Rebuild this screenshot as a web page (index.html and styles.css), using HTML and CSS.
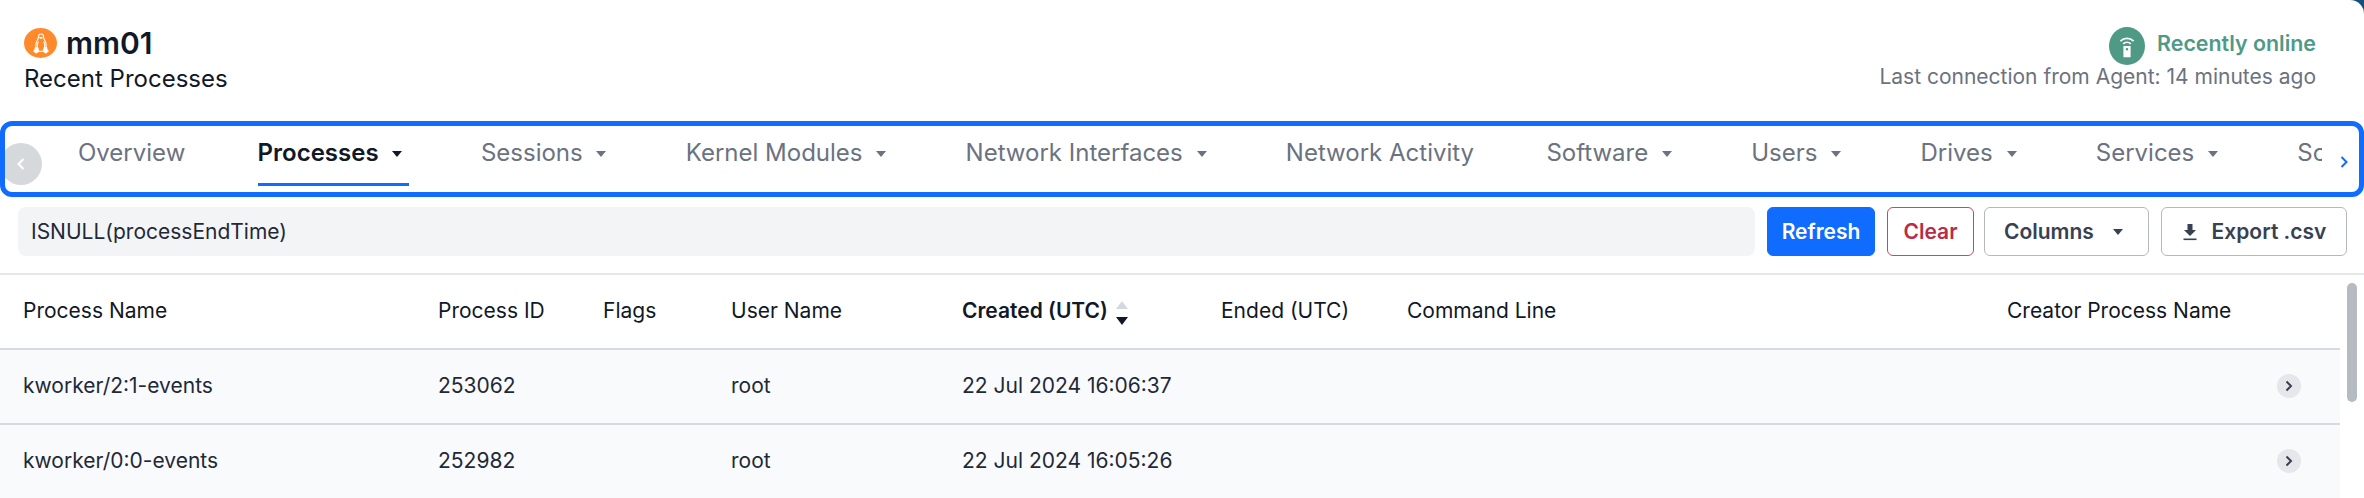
FILE: index.html
```html
<!DOCTYPE html>
<html>
  <head>
    <meta charset="UTF-8">
    <title>mm01 Recent Processes</title>
    <link rel="stylesheet" href="styles.css">
  </head>
  <body>
    <div class="page">
    <header class="head">
      <div>
        <h1 class="host">
          <span class="os-badge">
            <svg width="16" height="21" viewBox="0 0 16 21" fill="none" stroke="#fff" stroke-width="1.100" stroke-linejoin="round">
              <path d="M8 1C6.300 1 5.500 2.300 5.500 3.800c0 1.400-.3 2.200-1.200 3.400C3.200 8.800 2.600 10.800 2.800 13.500"/>
              <path d="M8 1c1.700 0 2.500 1.300 2.500 2.800 0 1.400.3 2.200 1.200 3.400 1.100 1.600 1.700 3.600 1.500 6.300"/>
              <path d="M6.700 4.500L8 5.400l1.300-.9z" fill="#fff"/>
              <path d="M5.300 8.500C4.300 10.500 4 13 4.600 15M10.700 8.500c1 2 1.300 4.500.7 6.500"/>
              <path d="M2.500 14l2.300 1 1 3.300-2.800 1.600L.8 18l1-.8zM13.500 14l-2.300 1-1 3.300 2.800 1.600 2.200-1.900-1-.8z" fill="#fff"/>
              <path d="M5.800 18.300h4.400"/>
            </svg>
          </span>
          mm01
        </h1>
        <div class="sub">Recent Processes</div>
      </div>
      <div class="status">
        <div class="online">
          <span class="online-badge">
            <svg width="16" height="24" viewBox="0 0 20 30" fill="#fff">
              <path d="M1 8a13 13 0 0 1 18 0l-1.500 1.600a11 11 0 0 0-15 0z"/>
              <path d="M4.500 11.500a8 8 0 0 1 11 0L14 13a6 6 0 0 0-8 0z"/>
              <path fill-rule="evenodd" d="M5.500 15h9v14h-9zM10 17.500a1.600 1.600 0 1 0 0 3.200 1.600 1.600 0 0 0 0-3.200z"/>
            </svg>
          </span>
          Recently online
        </div>
        <div class="last-seen">Last connection from Agent: 14 minutes ago</div>
      </div>
    </header>

    <nav class="tabs">
      <span class="tab-arrow prev">
        <svg width="10" height="14" viewBox="0 0 10 14" fill="none" stroke="#fff" stroke-width="2"><path d="M7.500 2L2.500 7l5 5"/></svg>
      </span>
      <div class="tab-list">
        <a class="tab">Overview</a>
        <a class="tab active has-menu">Processes <i class="caret"></i></a>
        <a class="tab has-menu">Sessions <i class="caret"></i></a>
        <a class="tab has-menu">Kernel Modules <i class="caret"></i></a>
        <a class="tab has-menu">Network Interfaces <i class="caret"></i></a>
        <a class="tab">Network Activity</a>
        <a class="tab has-menu">Software <i class="caret"></i></a>
        <a class="tab has-menu">Users <i class="caret"></i></a>
        <a class="tab has-menu">Drives <i class="caret"></i></a>
        <a class="tab has-menu">Services <i class="caret"></i></a>
        <a class="tab has-menu">Scheduled Tasks <i class="caret"></i></a>
      </div>
      <span class="tab-arrow next">
        <svg width="10" height="14" viewBox="0 0 10 14" fill="none" stroke="#0f6cff" stroke-width="2"><path d="M2.500 2l5 5-5 5"/></svg>
      </span>
    </nav>

    <div class="toolbar">
      <div class="query">ISNULL(processEndTime)</div>
      <button class="btn primary">Refresh</button>
      <button class="btn danger">Clear</button>
      <button class="btn columns">Columns <i class="caret dark"></i></button>
      <button class="btn export">
        <svg width="16" height="18" viewBox="0 0 16 18" fill="#374151"><path d="M5.500 1h5v6h3.500L8 13 2 7h3.500z"/><path d="M1.500 15.500h13v1.600h-13z"/></svg>
        Export .csv
      </button>
    </div>

    <section class="table">
      <div class="row head-row">
        <span>Process Name</span>
        <span>Process ID</span>
        <span>Flags</span>
        <span>User Name</span>
        <span class="sorted">Created (UTC) <i class="sort"><b></b><b></b></i></span>
        <span>Ended (UTC)</span>
        <span>Command Line</span>
        <span>Creator Process Name</span>
      </div>
      <div class="row">
        <span>kworker/2:1-events</span>
        <span>253062</span>
        <span></span>
        <span>root</span>
        <span>22 Jul 2024 16:06:37</span>
        <span></span>
        <span></span>
        <span class="more"><i class="more-btn"><svg width="10" height="12" viewBox="0 0 10 12" fill="none" stroke="#374151" stroke-width="2"><path d="M2.500 1.500L7 6l-4.500 4.500"/></svg></i></span>
      </div>
      <div class="row">
        <span>kworker/0:0-events</span>
        <span>252982</span>
        <span></span>
        <span>root</span>
        <span>22 Jul 2024 16:05:26</span>
        <span></span>
        <span></span>
        <span class="more"><i class="more-btn"><svg width="10" height="12" viewBox="0 0 10 12" fill="none" stroke="#374151" stroke-width="2"><path d="M2.500 1.500L7 6l-4.500 4.500"/></svg></i></span>
      </div>
      <div class="scrollbar"></div>
    </section>
    </div>
  </body>
</html>
```

FILE: styles.css
```css
html, body { margin: 0; padding: 0; background: #17507f; }
body { width: 2364px; height: 498px; overflow: hidden; font-family: Inter, sans-serif; font-size: 21px; color: #1f2937; }
.page { height: 498px; overflow: hidden; background: #fff; border-top-right-radius: 14px; }

.head { display: flex; justify-content: space-between; height: 121px; padding: 23px 48px 0 24px; box-sizing: border-box; }
.host { display: flex; align-items: center; gap: 9px; margin: 0; font-size: 30px; line-height: 40px; font-weight: 600; color: #111827; }
.os-badge { display: flex; align-items: center; justify-content: center; width: 33px; height: 30px; border-radius: 50%; background: #ff8a2b; }
.sub { font-size: 24px; line-height: 32px; color: #111827; }
.status { text-align: right; }
.online { display: flex; align-items: center; justify-content: flex-end; gap: 12px; height: 40px; font-size: 21.400px; font-weight: 600; color: #4f9a87; }
.online-badge { display: flex; align-items: center; justify-content: center; width: 36px; height: 38px; margin-top: 6px; border-radius: 50%; background: #4f9a87; }
.last-seen { line-height: 28px; color: #6b7280; }

.tabs { position: relative; height: 76px; box-sizing: border-box; border: 5px solid #0f6cff; border-radius: 12px; overflow: hidden; }
.tab-list { display: flex; gap: 72.300px; margin: 0 37px 0 73px; overflow: hidden; height: 66px; }
.tab { display: block; flex: none; height: 60px; line-height: 53px; font-size: 24px; color: #6b7280; white-space: nowrap; }
.tab.has-menu { padding-right: 7px; }
.tab.active { color: #111827; font-weight: 600; border-bottom: 3px solid #0f6cff; box-sizing: border-box; height: 60px; }
.caret { display: inline-block; width: 0; height: 0; margin-left: 7px; vertical-align: middle; border: 5px solid transparent; border-top: 6px solid #6b7280; border-bottom: 0; }
.tab.active .caret { border-top-color: #111827; }
.caret.dark { border-top-color: #374151; margin-left: 0; }
.tab-arrow { position: absolute; top: 17px; display: flex; align-items: center; justify-content: center; }
.tab-arrow.prev { left: -5px; width: 42px; height: 42px; border-radius: 50%; background: #d6d9dc; }
.tab-arrow.next { right: 10px; top: 29px; }

.toolbar { display: flex; gap: 12px; align-items: stretch; height: 49px; margin-top: 10px; padding: 0 17px 0 18px; }
.query { flex: 1; display: flex; align-items: center; padding-left: 13px; border-radius: 8px; background: #f3f4f6; color: #1f2937; }
.btn { display: flex; align-items: center; justify-content: center; padding: 0; border: 1px solid #b4b8bf; border-radius: 6px; background: #fff; font: 600 21px Inter, sans-serif; color: #374151; }
.btn.primary { width: 108px; background: #0f6cff; border-color: #0f6cff; color: #fff; }
.btn.danger { width: 87px; border-color: #c9485b; color: #b92c44; }
.btn.columns { width: 165px; margin-left: -2px; box-sizing: border-box; padding: 0 25px 0 19px; justify-content: space-between; }
.btn.export { width: 186px; gap: 14px; }

.table { position: relative; margin-top: 17px; border-top: 2px solid #e5e7eb; }
.row { display: grid; grid-template-columns: 415px 165px 128px 231px 259px 186px 600px 333px; align-items: center; width: 2340px; height: 75px; box-sizing: border-box; padding: 0 0 2px 23px; border-bottom: 2px solid #d7dade; background: #f9fafb; }
.row.head-row { background: #fff; color: #111827; }
.row:last-of-type { border-bottom: 0; }
.sorted { display: flex; align-items: center; gap: 8px; font-weight: 600; }
.sort { display: flex; flex-direction: column; gap: 8px; margin-top: 4px; }
.sort b { display: block; width: 0; height: 0; border: 6px solid transparent; border-top: 0; border-bottom: 8px solid #d6d9dc; }
.sort b + b { border-bottom: 0; border-top: 8px solid #111827; }
.more { justify-self: end; padding-right: 39px; }
.more-btn { display: flex; align-items: center; justify-content: center; width: 24px; height: 24px; border-radius: 50%; background: #e5e7eb; }
.scrollbar { position: absolute; top: 8px; left: 2347px; width: 10px; height: 119px; border-radius: 5px; background: #b6bac1; }
```
